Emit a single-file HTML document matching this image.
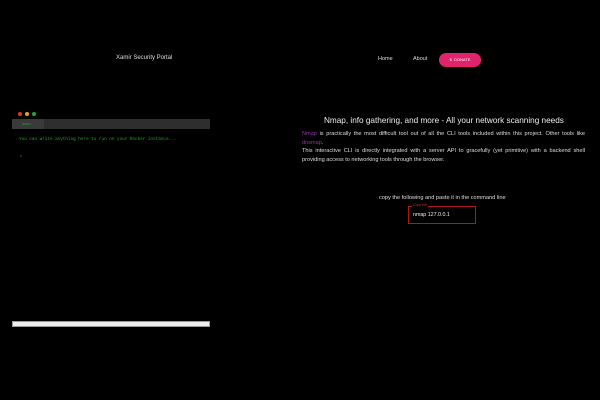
<!DOCTYPE html>
<html><head><style>
body{margin:0;width:600px;height:400px;background:#000;overflow:hidden;font-family:"Liberation Sans",sans-serif;position:relative;color:#fff}
.a{position:absolute;white-space:nowrap}
</style></head><body>
<div class="a" style="left:116px;top:55px;font-size:6px;color:#ddd">Xamir Security Portal</div>
<div class="a" style="left:378px;top:56px;font-size:5.5px;color:#ddd">Home</div>
<div class="a" style="left:413px;top:56px;font-size:5.5px;color:#ddd">About</div>
<div class="a" style="left:439px;top:53px;width:42px;height:14px;border-radius:7px;background:#e0236b;font-size:4px;line-height:14px;text-align:center;color:#fff">$&nbsp; DONATE</div>
<div class="a" style="left:18px;top:112px;width:4px;height:4px;border-radius:50%;background:#e0342c"></div>
<div class="a" style="left:25px;top:112px;width:4px;height:4px;border-radius:50%;background:#e4a31c"></div>
<div class="a" style="left:32px;top:112px;width:4px;height:4px;border-radius:50%;background:#1ea83a"></div>
<div class="a" style="left:12px;top:119px;width:198px;height:10px;background:#2e2e2e"></div>
<div class="a" style="left:12px;top:119px;width:32px;height:10px;background:#3a3a3a;font-size:4px;line-height:10px;color:#2c9b2c;padding-left:10px;box-sizing:border-box">bash</div>
<div class="a" style="left:19px;top:137px;font-size:4.3px;font-family:'Liberation Mono',monospace;color:#22a522">You can write anything here to run on your Docker instance...</div>
<div class="a" style="left:20px;top:153px;font-size:4px;color:#888">&gt;</div>
<div class="a" style="left:12px;top:321px;width:198px;height:6px;background:#eee;border:1px solid #999;box-sizing:border-box"></div>
<div class="a" style="left:324px;top:116px;font-size:8.2px;color:#eee">Nmap, info gathering, and more - All your network scanning needs</div>
<div class="a" style="left:302px;top:130px;width:283px;font-size:5.6px;line-height:8.5px;color:#ddd;white-space:normal;text-align:justify"><span style="color:#9b2fae">Nmap</span> is practically the most difficult tool out of all the CLI tools included within this project. Other tools like <span style="color:#9b2fae">dnsmap</span>.<br>This interactive CLI is directly integrated with a server API to gracefully (yet primitive) with a backend shell providing access to networking tools through the browser.</div>
<div class="a" style="left:379px;top:195px;font-size:5.6px;color:#ddd">copy the following and paste it in the command line</div>
<div class="a" style="left:408px;top:206px;width:68px;height:18px;border:1px solid #b01818;box-sizing:border-box"></div>
<div class="a" style="left:412px;top:203px;font-size:3.5px;color:#d03030;background:#000;padding:0 1px">Copy me</div>
<div class="a" style="left:413px;top:212px;font-size:5.3px;color:#eee">nmap 127.0.0.1</div>
</body></html>
